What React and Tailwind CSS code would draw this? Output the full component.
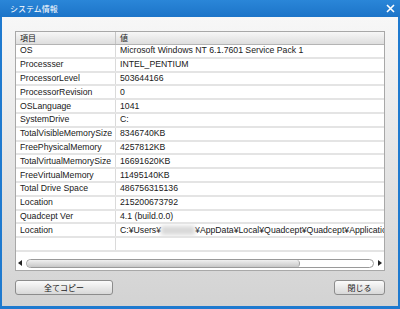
import React from 'react';

const rows = [
  ['OS', 'Microsoft Windows NT 6.1.7601 Service Pack 1'],
  ['Processser', 'INTEL_PENTIUM'],
  ['ProcessorLevel', '503644166'],
  ['ProcessorRevision', '0'],
  ['OSLanguage', '1041'],
  ['SystemDrive', 'C:'],
  ['TotalVisibleMemorySize', '8346740KB'],
  ['FreePhysicalMemory', '4257812KB'],
  ['TotalVirtualMemorySize', '16691620KB'],
  ['FreeVirtualMemory', '11495140KB'],
  ['Total Drive Space', '486756315136'],
  ['Location', '215200673792'],
  ['Quadcept Ver', '4.1 (build.0.0)'],
  ['Location', null],
];

const jp = { fontFamily: '"Noto Sans CJK JP", sans-serif' };

function Cell({ children, first }) {
  return (
    <div
      className={`h-full flex items-center overflow-hidden whitespace-nowrap pl-[4px] ${
        first ? 'w-[100px] shrink-0 border-r border-[#dadada]' : 'flex-1 min-w-0'
      }`}
    >
      {children}
    </div>
  );
}

export default function App() {
  return (
    <div
      className="w-[400px] h-[309px] flex flex-col bg-[#1f7acf] text-[#202020]"
      style={{ fontFamily: '"Liberation Sans", "Noto Sans CJK JP", sans-serif' }}
    >
      <div className="h-[17px] shrink-0 flex items-center justify-between pl-[10px] pr-[5px] bg-gradient-to-b from-[#2a86d8] to-[#1c74c8]">
        <span className="text-[8px] text-white leading-none" style={jp}>
          システム情報
        </span>
        <svg width="9" height="9" viewBox="0 0 9 9">
          <path d="M1 1 L8 8 M8 1 L1 8" stroke="#fff" strokeWidth="1.6" />
        </svg>
      </div>

      <div className="flex-1 mx-[2px] mb-[3px] flex flex-col px-[13px] pt-[14px] bg-gradient-to-b from-[#f7f7f7] to-[#d3d3d3]">
        <div className="h-[240px] w-[370px] border border-[#a8a8a8] bg-white flex flex-col text-[8.7px]">
          <div className="h-[13px] shrink-0 flex border-b border-[#b4b4b4] bg-gradient-to-b from-[#f7f7f7] to-[#dedede] text-[8px]">
            <div className="w-[100px] shrink-0 border-r border-[#c4c4c4] flex items-center pl-[4px]" style={jp}>
              項目
            </div>
            <div className="flex-1 flex items-center pl-[4px]" style={jp}>
              値
            </div>
          </div>
          {rows.map(([k, v], i) => (
            <div key={i} className="h-[13.8px] shrink-0 flex border-b-2 border-[#e4e4e4]">
              <Cell first>{k}</Cell>
              <Cell>
                {v !== null ? (
                  v
                ) : (
                  <span className="flex items-center">
                    C:¥Users¥
                    <span className="inline-block w-[34px] h-[9px] bg-[#d8d8d8] blur-[2px]" />
                    ¥AppData¥Local¥Quadcept¥Quadcept¥Application
                  </span>
                )}
              </Cell>
            </div>
          ))}
          <div className="h-[13.8px] shrink-0 flex border-b-2 border-[#e4e4e4]">
            <Cell first />
            <Cell />
          </div>
          <div className="flex-1" />
          <div className="h-[10px] shrink-0 flex items-center px-[2px] mb-[2px]">
            <svg width="5" height="6" viewBox="0 0 5 6" className="shrink-0">
              <path d="M4 0 L0 3 L4 6 Z" fill="#222" />
            </svg>
            <div className="flex-1 h-[9px] mx-[3px] rounded-[5px] border border-[#9a9a9a] bg-white flex overflow-hidden">
              <div className="w-[273px] h-full rounded-[5px] border-r border-[#a0a0a0] bg-gradient-to-b from-[#f0f0f0] to-[#c8c8c8]" />
            </div>
            <svg width="5" height="6" viewBox="0 0 5 6" className="shrink-0">
              <path d="M1 0 L5 3 L1 6 Z" fill="#222" />
            </svg>
          </div>
        </div>

        <div className="mt-[9px] w-[370px] flex justify-between text-[8px]" style={jp}>
          <button className="w-[98px] h-[15px] rounded-[3px] border border-[#8c8c8c] bg-gradient-to-b from-[#fbfbfb] to-[#d8d8d8] flex items-center justify-center leading-none">
            全てコピー
          </button>
          <button className="w-[51px] h-[15px] rounded-[3px] border border-[#8c8c8c] bg-gradient-to-b from-[#fbfbfb] to-[#d8d8d8] flex items-center justify-center leading-none">
            閉じる
          </button>
        </div>
      </div>
    </div>
  );
}
